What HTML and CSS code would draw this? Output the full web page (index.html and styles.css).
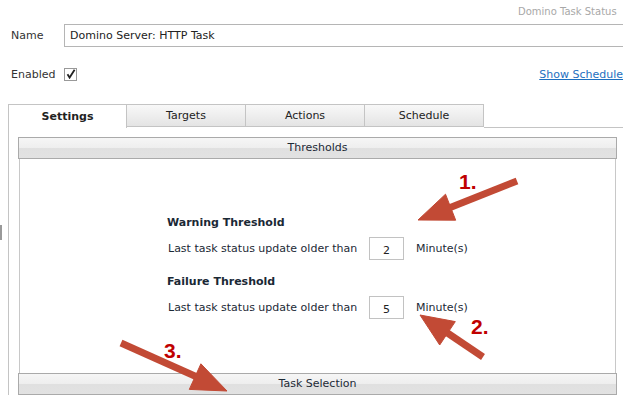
FILE: index.html
```html
<!DOCTYPE html>
<html lang="en">
<head>
    <meta charset="UTF-8">
    <title>Domino Task Status</title>
    <link rel="stylesheet" href="styles.css">
</head>
<body>
    <div class="page">
        <div class="page-title">Domino Task Status</div>

        <!-- General fields -->
        <div class="field-row name-row">
            <label for="taskName">Name</label>
            <input type="text" id="taskName" class="name-input" value="Domino Server: HTTP Task">
        </div>
        <div class="field-row enabled-row">
            <label>Enabled</label>
            <span class="checkbox">
                <svg width="10" height="10" viewBox="0 0 10 10"><path d="M1.5 5.2 L3.6 8.6 L8.6 0.8" fill="none" stroke="#222" stroke-width="1.8"/></svg>
            </span>
            <a href="#" class="schedule-link">Show Schedule</a>
        </div>

        <!-- Tabs -->
        <div class="tab-panel">
            <div class="tabs">
                <div class="tab active">Settings</div>
                <div class="tab">Targets</div>
                <div class="tab">Actions</div>
                <div class="tab">Schedule</div>
                <div class="tab-fill"></div>
            </div>
            <div class="tab-body">
                <div class="section-bar">Thresholds</div>
                <div class="section-box">
                    <div class="thresholds">
                        <h3>Warning Threshold</h3>
                        <div class="threshold-row">
                            <span class="row-label">Last task status update older than</span>
                            <input type="text" class="minutes" value="2">
                            <span>Minute(s)</span>
                        </div>
                        <h3>Failure Threshold</h3>
                        <div class="threshold-row">
                            <span class="row-label">Last task status update older than</span>
                            <input type="text" class="minutes" value="5">
                            <span>Minute(s)</span>
                        </div>
                    </div>
                </div>
                <div class="section-bar">Task Selection</div>
            </div>
        </div>

        <div class="edge-mark"></div>

        <!-- Annotation arrows -->
        <svg class="annotations" width="623" height="395" viewBox="0 0 623 395">
            <g fill="#c24a35" stroke="#c24a35">
                <line x1="517" y1="181" x2="449" y2="208" stroke-width="7"/>
                <polygon points="418,220 455.7,220.2 445.5,194.2" stroke-width="1"/>
                <line x1="483" y1="357" x2="446" y2="332" stroke-width="7"/>
                <polygon points="420,315 455.3,321.6 439.7,345" stroke-width="1"/>
                <line x1="121" y1="343" x2="197" y2="377" stroke-width="7"/>
                <polygon points="227,391 189.3,389.4 200.9,363.8" stroke-width="1"/>
            </g>
            <g class="marker">
                <text x="459" y="189">1.</text>
                <text x="471" y="334">2.</text>
                <text x="164" y="358">3.</text>
            </g>
        </svg>
    </div>
</body>
</html>
```

FILE: styles.css
```css
body {
    margin: 0;
    padding: 0;
    overflow: hidden;
    background-color: #fff;
    font-family: "DejaVu Sans", Verdana, sans-serif;
    font-size: 11px;
    color: #222;
}

.page {
    position: relative;
    width: 640px;
    height: 395px;
    overflow: hidden;
}

.page-title {
    height: 18px;
    padding: 6px 0 0 518px;
    white-space: nowrap;
    color: #a8a8a8;
    font-size: 10px;
}

.field-row {
    display: flex;
    align-items: center;
    padding-left: 11px;
}

.field-row label {
    width: 53px;
    flex: none;
    color: #333;
}

.name-row {
    height: 23px;
}

.name-input {
    flex: 1;
    height: 23px;
    box-sizing: border-box;
    border: 1px solid #b5b5b5;
    padding: 0 0 0 5px;
    font-family: inherit;
    font-size: 11px;
    color: #222;
}

.enabled-row {
    margin-top: 20px;
    height: 14px;
}

.checkbox {
    width: 13px;
    height: 13px;
    box-sizing: border-box;
    border: 1px solid #999;
    display: flex;
    align-items: center;
    justify-content: center;
}

.schedule-link {
    margin-left: auto;
    margin-right: 17px;
    color: #1d6fc0;
    text-decoration: underline;
}

.tab-panel {
    margin: 23px 0 0 8px;
    border-left: 1px solid #c4c4c4;
    height: 300px;
}

.tabs {
    display: flex;
    height: 24px;
}

.tab {
    width: 118px;
    box-sizing: border-box;
    border: 1px solid #c4c4c4;
    border-left: none;
    background: linear-gradient(#f8f8f8, #e4e4e4);
    text-align: center;
    line-height: 21px;
    color: #222;
    height: 23px;
}

.tab + .tab {
    border-left: 1px solid #c4c4c4;
    margin-left: -1px;
    width: 120px;
}

.tab.active {
    background: #fff;
    font-weight: bold;
    border-bottom: none;
    height: 24px;
    line-height: 24px;
}

.tab-fill {
    flex: 1;
    border-bottom: 1px solid #c4c4c4;
    height: 23px;
}

.tab-body {
    padding: 9px 0 0 9px;
    width: 599px;
}

.section-bar {
    height: 22px;
    box-sizing: border-box;
    border: 1px solid #aaa;
    background: linear-gradient(#f6f6f6 0%, #eeeeee 50%, #e0e0e0 51%, #e2e2e2 100%);
    text-align: center;
    line-height: 20px;
    color: #1c2a36;
}

.section-box {
    margin: 0 1px;
    height: 214px;
    border-left: 1px solid #c8c8c8;
    border-right: 1px solid #c8c8c8;
    box-sizing: border-box;
    padding-top: 56px;
}

.thresholds {
    margin-left: 147px;
    color: #1c2a36;
}

.thresholds h3 {
    margin: 0;
    font-size: 11px;
    line-height: 15px;
    color: #1a2835;
}

.thresholds h3 + .threshold-row {
    margin-top: 7px;
}

.threshold-row + h3 {
    margin-top: 14px;
}

.threshold-row {
    display: flex;
    align-items: center;
    height: 23px;
}

.row-label {
    width: 201px;
    padding-left: 1px;
}

.minutes {
    width: 35px;
    height: 23px;
    box-sizing: border-box;
    border: 1px solid #c2c2c2;
    text-align: center;
    font-family: inherit;
    font-size: 11px;
    color: #222;
    padding: 3px 0 0 0;
    margin-right: 12px;
}

.edge-mark {
    position: absolute;
    left: 0;
    top: 225px;
    width: 2px;
    height: 15px;
    background-color: #999;
}

.annotations {
    position: absolute;
    left: 0;
    top: 0;
    pointer-events: none;
}

.marker text {
    font-family: "Liberation Sans", Arial, sans-serif;
    font-weight: bold;
    font-size: 21px;
    fill: #c00000;
}
```
